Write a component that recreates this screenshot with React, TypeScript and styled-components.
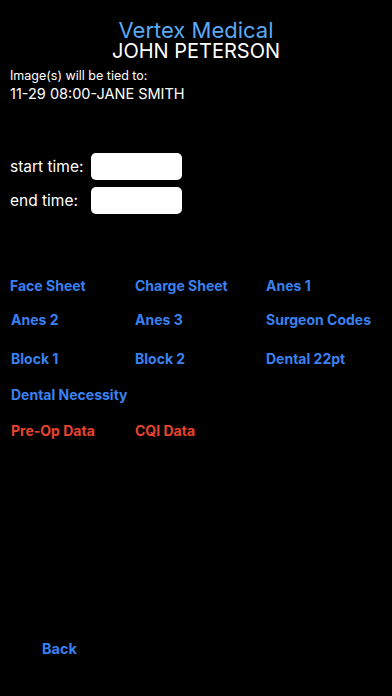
import React from "react";
import styled, { createGlobalStyle } from "styled-components";

const Global = createGlobalStyle`
  html, body { margin: 0; padding: 0; background: #000; }
  body { font-family: Inter, "Noto Sans", "Liberation Sans", sans-serif; color: #fff; }
`;

const Page = styled.div`
  width: 392px;
  height: 696px;
  background: #000;
  display: flex;
  flex-direction: column;
  overflow: hidden;
`;

const Header = styled.header`
  display: flex;
  flex-direction: column;
  align-items: center;
  padding-top: 19px;
`;

const Brand = styled.div`
  font-size: 22px;
  line-height: 22px;
  color: #5aa9f4;
`;

const Patient = styled.div`
  font-size: 20px;
  line-height: 21px;
  color: #fff;
`;

const Info = styled.div`
  padding: 5px 0 0 10px;
  display: flex;
  flex-direction: column;
`;

const InfoLabel = styled.div`
  font-size: 12.5px;
  line-height: 17px;
`;

const InfoValue = styled.div`
  font-size: 14.5px;
  line-height: 20px;
`;

const TimeForm = styled.div`
  margin-top: 49px;
  padding-left: 10px;
  display: grid;
  grid-template-columns: 81px 91px;
  row-gap: 7px;
  align-items: center;
`;

const TimeLabel = styled.label`
  font-size: 15.5px;
  color: #fff;
`;

const TimeInput = styled.div`
  height: 27px;
  background: #fff;
  border-radius: 5px;
`;

const LinkList = styled.div`
  margin-top: 61px;
  padding-left: 10px;
  display: flex;
  flex-direction: column;
`;

const LinkRow = styled.div<{ $gap: number }>`
  margin-top: ${(p) => p.$gap}px;
  height: 20px;
  display: grid;
  grid-template-columns: 125px 131px auto;
  align-items: center;
`;

const LinkText = styled.span<{ $red?: boolean; $nudge?: number }>`
  font-size: 14px;
  font-weight: 700;
  color: ${(p) => (p.$red ? "#e8432d" : "#3a80f0")};
  padding-left: ${(p) => p.$nudge ?? 0}px;
  white-space: nowrap;
`;

const Spacer = styled.div`
  flex: 1;
`;

const BackButton = styled.div`
  padding: 0 0 39px 42px;
  font-size: 14.5px;
  font-weight: 700;
  color: #3a80f0;
`;

const rows: { gap: number; items: { t: string; red?: boolean; nudge?: number }[] }[] = [
  { gap: 0, items: [{ t: "Face Sheet" }, { t: "Charge Sheet" }, { t: "Anes 1" }] },
  { gap: 14, items: [{ t: "Anes 2", nudge: 1 }, { t: "Anes 3" }, { t: "Surgeon Codes" }] },
  { gap: 19, items: [{ t: "Block 1", nudge: 1 }, { t: "Block 2" }, { t: "Dental 22pt" }] },
  { gap: 16, items: [{ t: "Dental Necessity", nudge: 1 }] },
  { gap: 16, items: [{ t: "Pre-Op Data", red: true, nudge: 1 }, { t: "CQI Data", red: true }] },
];

export default function App() {
  return (
    <Page>
      <Global />
      <Header>
        <Brand>Vertex Medical</Brand>
        <Patient>JOHN PETERSON</Patient>
      </Header>
      <Info>
        <InfoLabel>Image(s) will be tied to:</InfoLabel>
        <InfoValue>11-29 08:00-JANE SMITH</InfoValue>
      </Info>
      <TimeForm>
        <TimeLabel>start time:</TimeLabel>
        <TimeInput />
        <TimeLabel>end time:</TimeLabel>
        <TimeInput />
      </TimeForm>
      <LinkList>
        {rows.map((r, i) => (
          <LinkRow key={i} $gap={r.gap}>
            {r.items.map((l, j) => (
              <LinkText key={j} $red={l.red} $nudge={l.nudge}>
                {l.t}
              </LinkText>
            ))}
          </LinkRow>
        ))}
      </LinkList>
      <Spacer />
      <BackButton>Back</BackButton>
    </Page>
  );
}
